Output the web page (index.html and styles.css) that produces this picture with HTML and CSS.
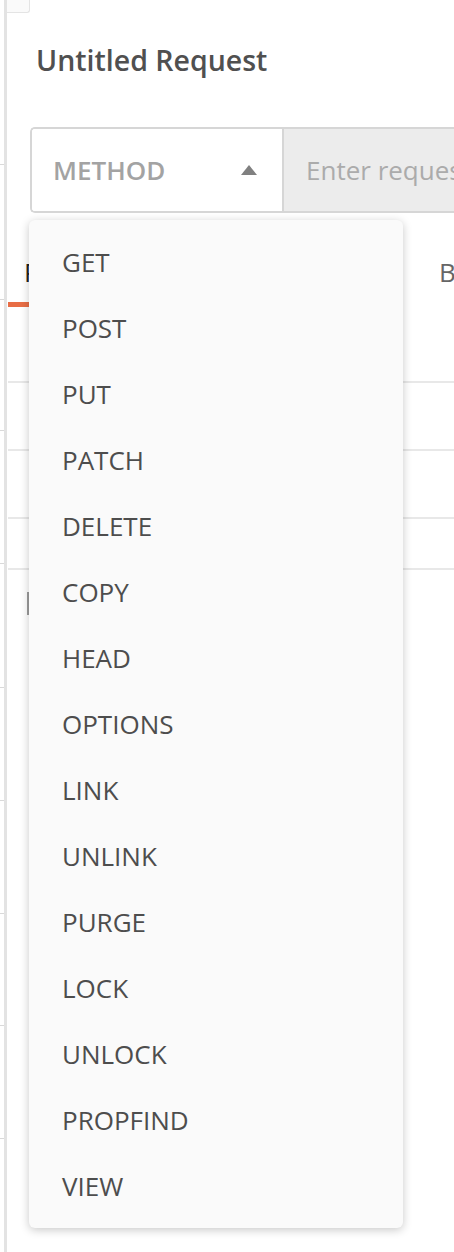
FILE: index.html
```html
<!DOCTYPE html>
<html>
<head>
<meta charset="utf-8">
<link rel="stylesheet" href="styles.css">
</head>
<body>
<div class="app">
  <div class="sidebar">
    <div class="srow"></div><div class="srow"></div><div class="srow"></div>
    <div class="srow"></div><div class="srow"></div><div class="srow"></div>
    <div class="srow"></div><div class="srow"></div><div class="srow"></div>
  </div>
  <div class="divider"></div>
  <div class="main">
    <div class="stub"></div>
    <h1 class="title">Untitled Request</h1>
    <div class="reqbar">
      <div class="method">
        <span class="method-label">METHOD</span>
        <svg class="caret" width="16" height="10" viewBox="0 0 16 10"><path d="M8 0 L16 10 L0 10 Z" fill="#808080"/></svg>
      </div>
      <div class="url">Enter request URL</div>
    </div>
    <div class="tabs">
      <span class="tab active">Params</span>
      <span class="tab">Auth</span>
      <span class="tab">Headers</span>
      <span class="tab">Body</span>
    </div>
    <div class="rows">
      <div class="row r1"></div>
      <div class="row r2"></div>
      <div class="row r3"></div>
      <div class="row r4"></div>
    </div>
    <div class="mark"></div>

    <ul class="dropdown">
      <li>GET</li>
      <li>POST</li>
      <li>PUT</li>
      <li>PATCH</li>
      <li>DELETE</li>
      <li>COPY</li>
      <li>HEAD</li>
      <li>OPTIONS</li>
      <li>LINK</li>
      <li>UNLINK</li>
      <li>PURGE</li>
      <li>LOCK</li>
      <li>UNLOCK</li>
      <li>PROPFIND</li>
      <li>VIEW</li>
    </ul>
  </div>
</div>
</body>
</html>
```

FILE: styles.css
```css
* { box-sizing: border-box; }
html, body {
  margin: 0;
  padding: 0;
  background: #ffffff;
  font-family: "Open Sans", "Noto Sans", sans-serif;
}
.app {
  display: flex;
  height: 1252px;
  overflow: hidden;
}
.sidebar {
  width: 4px;
  display: grid;
  grid-template-rows: 165px 135px 131px 133px 124px 113px 113px 112px 113px;
  align-content: start;
}
.srow {
  border-bottom: 1px solid #d9d9d9;
}
.divider {
  width: 3px;
  background: #e3e3e3;
}
.main {
  flex: 1;
  position: relative;
  overflow: hidden;
  padding-left: 1px;
}
.stub {
  width: 23px;
  height: 13px;
  margin-left: -1px;
  background: #fafafa;
  border-right: 1px solid #e4e4e4;
  border-bottom: 1px solid #e4e4e4;
  border-bottom-right-radius: 3px;
}
.title {
  margin: 27px 0 0 28px;
  font-size: 28.5px;
  line-height: 40px;
  font-weight: 600;
  color: #505050;
  white-space: nowrap;
}
.reqbar {
  display: flex;
  margin: 47px 0 0 22px;
  height: 86px;
  width: 460px;
  border: 2px solid #d6d6d6;
  border-right: none;
  border-radius: 5px 0 0 5px;
  overflow: hidden;
}
.method {
  width: 252px;
  flex: none;
  display: flex;
  align-items: center;
  justify-content: space-between;
  padding: 0 25px 0 21px;
  border-right: 2px solid #d6d6d6;
  background: #ffffff;
}
.method-label {
  font-size: 26px;
  font-weight: 600;
  color: #a3a3a3;
}
.caret { display: block; }
.url {
  flex: 1;
  display: flex;
  align-items: center;
  padding-left: 22px;
  background: #ececec;
  font-size: 26px;
  color: #ababab;
  white-space: nowrap;
}
.tabs {
  display: flex;
  gap: 50.7px;
  padding: 41px 0 0 16px;
  height: 94px;
  white-space: nowrap;
}
.tab {
  font-size: 26px;
  line-height: 36px;
  color: #666666;
  height: 53px;
}
.tab.active {
  color: #222222;
  border-bottom: 5px solid #e86d45;
  margin-left: -16px;
  padding-left: 16px;
  padding-right: 12px;
}
.rows {
  display: flex;
  flex-direction: column;
}
.row {
  border-bottom: 2px solid #e8e8e8;
}
.r1 { height: 76px; }
.r2 { height: 68px; }
.r3 { height: 68px; }
.r4 { height: 51px; }
.mark {
  width: 10px;
  height: 23px;
  margin: 22px 0 0 19px;
  background: #9c9c9c;
}
.dropdown {
  position: absolute;
  left: 22px;
  top: 220px;
  width: 374px;
  height: 1008px;
  margin: 0;
  padding: 9px 0 0 0;
  list-style: none;
  background: #fafafa;
  border-radius: 6px;
  box-shadow: 0 2px 10px rgba(0, 0, 0, 0.22);
}
.dropdown li {
  height: 66px;
  line-height: 66px;
  padding-left: 33px;
  font-size: 26px;
  color: #4d4d4d;
}
```
